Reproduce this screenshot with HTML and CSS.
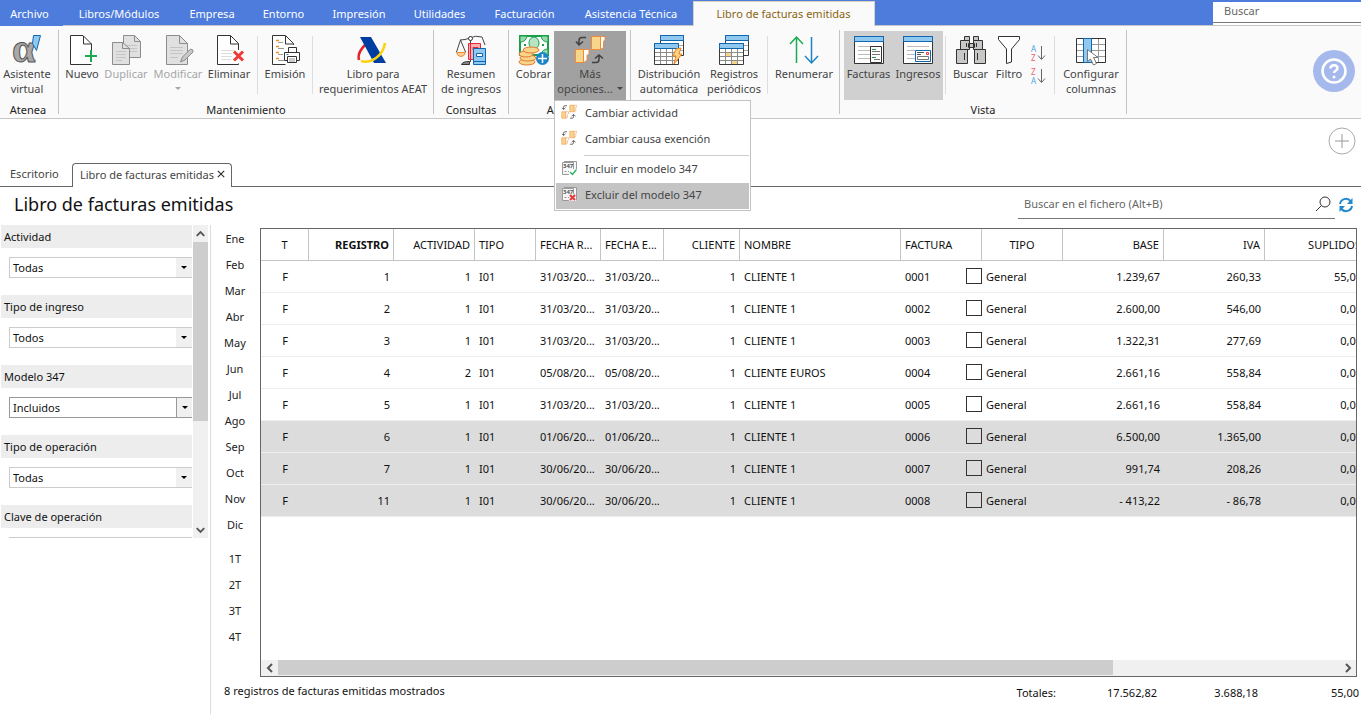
FILE: index.html
```html
<!DOCTYPE html>
<html lang="es">
<head>
<meta charset="utf-8">
<title>Libro de facturas emitidas</title>
<link rel="stylesheet" href="styles.css">
</head>
<body>
<svg class="defs" aria-hidden="true">
  <symbol id="swap" viewBox="0 0 32 32">
    <g fill="#f7d58a" stroke="#ee8a3a">
      <path d="M17.500 2.500h9v13h-9z"/><path fill="#fff" d="M26.500 2.500h4.500v3l-1.500 2v6l-3 2z"/>
      <path d="M1.500 15.500h8v13h-8z"/><path fill="#fff" d="M9.500 15.500h5.500v4l-2 2v5l-3.500 2z"/>
    </g>
    <path d="M12 3.500H8q-3 0-3 3v4M2 7.500l3 3.500 4-3.500M18 28.500h4q3 0 3-3v-4M21 24.500l4-3.500 4 3.500" fill="none" stroke="#404040" stroke-width="1.500"/>
  </symbol>
  <symbol id="calendars" viewBox="0 0 32 32">
    <path d="M7.500 1.500h23v20h-23z" fill="#fff" stroke="#3a3a38"/><path d="M7.500 1.500h23v5h-23z" fill="#90c8f0" stroke="#1067b0"/>
    <path d="M26 11.500h4M26 16.500h4" stroke="#aaa"/>
    <path d="M1.500 9.500h24v21h-24z" fill="#fff" stroke="#3a3a38"/>
    <path d="M2 18.500h23M2 22.500h23M2 26.500h23M7.500 14v16M13.500 14v16M19.500 14v16" stroke="#8b8b89"/>
    <path d="M1.500 9.500h24v5h-24z" fill="#90c8f0" stroke="#1067b0"/>
  </symbol>
  <symbol id="form347" viewBox="0 0 16 16">
    <path d="M3 1.500h12.500v12H13M1.500 2.500h11v12h-11z" fill="#f6f6f6" stroke="#999"/>
    <path d="M3.500 11.500h2M7 11.500h2" stroke="#999"/>
    <text x="2" y="8" font-size="6" font-weight="bold" fill="#555">347</text>
  </symbol>
</svg>

<header class="menubar">
  <nav class="menu-tabs" aria-label="Menú principal">
    <button class="menu-tab first">Archivo</button>
    <button class="menu-tab">Libros/Módulos</button>
    <button class="menu-tab">Empresa</button>
    <button class="menu-tab">Entorno</button>
    <button class="menu-tab">Impresión</button>
    <button class="menu-tab">Utilidades</button>
    <button class="menu-tab">Facturación</button>
    <button class="menu-tab">Asistencia Técnica</button>
    <button class="menu-tab active">Libro de facturas emitidas</button>
  </nav>
  <div class="app-search"><input type="text" aria-label="Buscar" placeholder="Buscar"></div>
</header>

<section class="ribbon">
  <div class="group g-atenea">
    <div class="tools">
      <button class="tool"><svg viewBox="0 0 32 32"><text x="1" y="28" font-family="Liberation Serif" font-size="42" font-weight="bold" fill="#a8a8a8" stroke="#555">α</text><path d="M22.500 1.500h7l-4 15-4-7z" fill="#90c8f0" stroke="#1067b0"/></svg><span>Asistente<br>virtual</span></button>
    </div>
    <div class="caption">Atenea</div>
  </div>
  <div class="group g-mant">
    <div class="tools">
      <button class="tool"><svg viewBox="0 0 32 32"><path d="M25.500 15v-5l-8.500-8.500H4.500v29h21v-3" fill="#fff"/><path d="M25.500 16v-6l-8.500-8.500H4.500v29h21M17.500 2v8h8" fill="none" stroke="#333"/><path d="M25 16v12M19 22h12" stroke="#18ab50" stroke-width="2"/></svg>Nuevo</button>
      <button class="tool off"><svg viewBox="0 0 32 32"><g fill="#e0e0e0" stroke="#8c8c8c"><path d="M13.500 1.500h11l6 6v16h-17z"/><path fill="none" d="M24.500 1.500v6h6"/><path stroke="#c4c4c4" d="M16 11.500h11M16 14.500h11M16 17.500h11"/><path d="M2.500 8.500h10l7 6v16h-17z"/><path fill="none" d="M12.500 8.500v6h7"/><path stroke="#c4c4c4" d="M6 17.500h10M6 20.500h10M6 23.500h10M6 26.500h6"/></g></svg>Duplicar</button>
      <button class="tool off"><svg viewBox="0 0 32 32"><g fill="#e0e0e0" stroke="#8c8c8c"><path d="M4.500 1.500h13l8 8v21h-21z"/><path fill="none" d="M17.500 1.500v8h8"/><path stroke="#c4c4c4" d="M8 13.500h13M8 16.500h13M8 19.500h13M8 23.500h8"/><path fill="#c8c8c8" d="M18.500 28l2-5 8-8q3 0 2.500 3l-8 8z"/></g></svg>Modificar<span class="arrow"></span></button>
      <button class="tool"><svg viewBox="0 0 32 32"><path d="M4.500 1.500h13l8 8v21h-21z" fill="#fff"/><path d="M25.500 16V9.500l-8-8h-13v29h21v-1M17.500 2v8h8" fill="none" stroke="#333"/><path d="M8 16.500h14M8 19.500h11M8 22.500h11M8 25.500h10" stroke="#ddd"/><path d="M21 17.500l9 9M30 17.500l-9 9" stroke="#f03a38" stroke-width="3"/></svg>Eliminar</button>
      <span class="split"></span>
      <button class="tool"><svg viewBox="0 0 32 32"><path d="M24.500 11V9.500l-8-8h-13v29h13M16.500 2v8h8" fill="#fff" stroke="#333"/><path d="M7 6.500h3M7 12.500h3M7 18.500h3M7 24.500h3" stroke="#f09020" stroke-width="1.500"/><path d="M9 8.500h5M9 14.500h6M9 20.500h5M9 26.500h6" stroke="#999"/><path d="M19.500 18v-4.500h8V18M15.500 18.500h15v8h-15z" fill="#fff" stroke="#333"/><path d="M18.500 22.500h9v6h-9z" fill="#fff" stroke="#333"/><path d="M20 25h6M20 27h6" stroke="#999"/><path d="M17.500 20.500h2" stroke="#1888cc"/></svg>Emisión</button>
      <span class="split"></span>
      <button class="tool"><svg viewBox="0 0 32 32"><path d="M8 11q-8 8-6 15" fill="none" stroke="#e62128" stroke-width="2.500"/><path d="M3 3h11l15 26H17z" fill="#003da0"/><path d="M4 27c10 3 22-5 24-18" fill="none" stroke="#ffd10a" stroke-width="2.500"/></svg><span>Libro para<br>requerimientos AEAT</span></button>
    </div>
    <div class="caption">Mantenimiento</div>
  </div>
  <div class="group g-cons">
    <div class="tools">
      <button class="tool"><svg viewBox="0 0 32 32"><path d="M5.500 6l-4 12M5.500 6l5 12M5 6q5 0 10-2 5-3 12-1l3 8M15.500 2v26" fill="none" stroke="#444"/><circle cx="15.500" cy="4.500" r="2" fill="#fff" stroke="#333"/><path d="M1.500 18.500h9q-1 4-4.500 4t-4.500-4z" fill="#f9cf96" stroke="#ee8a3a"/><path d="M6.500 30.500q1-3 8-3v3z" fill="#888" stroke="#333"/><path d="M13.500 9.500h12v16h-12z" fill="#fbaeb0" stroke="#e02a36"/><path d="M15.500 9v16M18 13.500h5v2h-5z" fill="none" stroke="#e02a36"/><path d="M18.500 14.500h12v16h-12z" fill="#90c8f0" stroke="#1067b0"/><path d="M18 27.500h12" stroke="#1067b0"/><path d="M21.500 19.500h6v3h-6z" fill="#fff" stroke="#1067b0"/></svg><span>Resumen<br>de ingresos</span></button>
    </div>
    <div class="caption">Consultas</div>
  </div>
  <div class="group g-acc">
    <div class="tools">
      <button class="tool"><svg viewBox="0 0 32 32"><path d="M2 2h28v19H2z" fill="#fff" stroke="#18a048" stroke-width="2"/><path d="M2 2h7q-1 6-7 6zM30 2h-7q1 6 7 6zM30 21h-7q1-6 7-6z" fill="#99d8ac" stroke="#18a048"/><ellipse cx="16" cy="9" rx="5" ry="6" fill="#b8e4c4" stroke="#18a048"/><path d="M6 11h2M24 11h2" stroke="#18a048" stroke-width="2"/><g fill="#f9d48b" stroke="#e07a30"><ellipse cx="9" cy="28" rx="8" ry="3"/><ellipse cx="10" cy="24" rx="8" ry="3"/><ellipse cx="8" cy="20" rx="7" ry="3"/><ellipse cx="13" cy="16" rx="8" ry="3"/></g><circle cx="24.500" cy="24.500" r="6.500" fill="#1c85c8"/><path d="M24.500 20v9M20 24.500h9" stroke="#fff" stroke-width="1.500"/></svg>Cobrar</button>
      <div class="drop">
        <button class="tool pressed" aria-haspopup="menu" aria-expanded="true"><svg><use href="#swap"/></svg><span>Más</span><span class="with-arrow">opciones...<i class="caret"></i></span></button>
        <div class="menu" role="menu">
          <button class="item" role="menuitem"><svg><use href="#swap"/></svg>Cambiar actividad</button>
          <button class="item" role="menuitem"><svg><use href="#swap"/></svg>Cambiar causa exención</button>
          <hr>
          <button class="item" role="menuitem"><svg viewBox="0 0 16 16"><use href="#form347"/><path d="M8 9h8v7H8z" fill="#fff"/><path d="M9 12l2.500 2.500L15.500 9.500" fill="none" stroke="#30b060" stroke-width="1.500"/></svg>Incluir en modelo 347</button>
          <button class="item hot" role="menuitem"><svg viewBox="0 0 16 16"><use href="#form347"/><path d="M8 8h7v7H8z" fill="#eee"/><path d="M9 9l5 5M14 9l-5 5" stroke="#e83838" stroke-width="2"/></svg>Excluir del modelo 347</button>
        </div>
      </div>
    </div>
    <div class="caption">Acciones</div>
  </div>
  <div class="group g-proc">
    <div class="tools">
      <button class="tool"><svg viewBox="0 0 32 32"><use href="#calendars"/><path d="M23 15l5-1-2 6h3l-8 10 2-8h-3z" fill="#fbd27c" stroke="#f08020"/></svg><span>Distribución<br>automática</span></button>
      <button class="tool"><svg viewBox="0 0 32 32"><use href="#calendars"/><path d="M8 19h5v3H8zM14 27h5v3h-5z" fill="#f8d58c"/></svg><span>Registros<br>periódicos</span></button>
      <span class="split"></span>
      <button class="tool"><svg viewBox="0 0 32 32"><path d="M8.500 29V3M2 10l6.500-7 6.500 7" fill="none" stroke="#18ab50" stroke-width="1.500"/><path d="M23.500 3v26M17 22l6.500 7 6.500-7" fill="none" stroke="#1c85c8" stroke-width="1.500"/></svg>Renumerar</button>
    </div>
  </div>
  <div class="group g-vista">
    <div class="tools">
      <button class="tool on"><svg viewBox="0 0 32 32"><path d="M1.500 2.500h29v27h-29z" fill="#fff" stroke="#333"/><path d="M1.500 2.500h29v5h-29z" fill="#90c8f0" stroke="#1067b0"/><path d="M5 12.500h22M5 16.500h12M5 20.500h12M5 24.500h12" stroke="#bbb"/><path d="M17.500 12.500h11v16h-11z" fill="#fff" stroke="#333"/><path d="M19 15.500h4M19 23.500h4" stroke="#189a48"/><path d="M19 17.500h8M19 20.500h8M21 25.500h6" stroke="#777"/></svg>Facturas</button>
      <button class="tool on"><svg viewBox="0 0 32 32"><path d="M1.500 2.500h29v27h-29z" fill="#fff" stroke="#333"/><path d="M1.500 2.500h29v5h-29z" fill="#90c8f0" stroke="#1067b0"/><path d="M5 12.500h22M5 16.500h8M5 20.500h8M5 24.500h8" stroke="#bbb"/><path d="M13.500 16.500h15v11h-15z" fill="#fff" stroke="#1067b0"/><path d="M15 18.500h7M15 20.500h4" stroke="#555"/><path d="M15.500 22.500h11v3h-11z" fill="#fff" stroke="#777"/><path d="M24.500 18.500h2v2h-2z" fill="#fff" stroke="#f03a38"/></svg>Ingresos</button>
      <span class="split"></span>
      <button class="tool"><svg viewBox="0 0 32 32"><g fill="#c8c8c6" stroke="#333"><path d="M9.500 2.500h5v4h-5zM18.500 2.500h5v4h-5zM13.500 9.500h6v4h-6zM5.500 6.500h9v9h-9zM18.500 6.500h9v9h-9zM1.500 15.500h11v14h-11zM19.500 15.500h11v14h-11z"/><path d="M9.500 19v7M22.500 19v7M11.500 9v4M21.500 9v4"/></g></svg>Buscar</button>
      <button class="tool"><svg viewBox="0 0 32 32"><path d="M5.500 2.500h21v3l-8 9.500v13l-5 1.500V15l-8-9.500z" fill="#fff" stroke="#333"/></svg>Filtro</button>
      <div class="sorts">
        <button aria-label="Orden ascendente"><svg viewBox="0 0 16 18"><g font-size="8"><text x="1" y="8" fill="#4aa3dc">A</text><text x="1" y="17" fill="#f06068">Z</text></g><path d="M11.500 2v13M8 11.500l3.500 4 3.500-4" fill="none" stroke="#666"/></svg></button>
        <button aria-label="Orden descendente"><svg viewBox="0 0 16 18"><g font-size="8"><text x="1" y="8" fill="#f06068">Z</text><text x="1" y="17" fill="#4aa3dc">A</text></g><path d="M11.500 2v13M8 11.500l3.500 4 3.500-4" fill="none" stroke="#666"/></svg></button>
      </div>
      <span class="split"></span>
      <button class="tool"><svg viewBox="0 0 32 32"><path d="M1.500 4.500h29v24h-29z" fill="#fff" stroke="#333"/><path d="M2 10.500h28M2 16.500h28M2 22.500h28M23.500 5v23" stroke="#999"/><path d="M8.500 4.500h8v24h-8z" fill="#90c8f0" stroke="#1067b0"/><path d="M12.500 15.500v12l3-2.500 3 6 3-1.500-3-6h4.500z" fill="#fff" stroke="#777"/></svg><span>Configurar<br>columnas</span></button>
    </div>
    <div class="caption">Vista</div>
  </div>
  <button class="help" aria-label="Ayuda"><svg viewBox="0 0 42 42"><circle cx="21" cy="21" r="21" fill="#a5b9ec"/><circle cx="21" cy="21" r="11.500" fill="none" stroke="#fff" stroke-width="2.500"/><path d="M17.500 18.500c0-4.500 7-4.500 7 0 0 2-3.500 2-3.500 4.500" fill="none" stroke="#fff" stroke-width="2.500"/><circle cx="21" cy="27" r="1.500" fill="#fff"/></svg></button>
</section>

<div class="quick"><button aria-label="Añadir"><svg viewBox="0 0 28 28"><circle cx="14" cy="14" r="13" fill="none" stroke="#aaa"/><path d="M14 7v14M7 14h14" stroke="#999"/></svg></button></div>

<nav class="pages" aria-label="Pestañas">
  <button class="page-tab">Escritorio</button>
  <div class="page-tab current"><span>Libro de facturas emitidas</span><button aria-label="Cerrar"><svg viewBox="0 0 10 10"><path d="M1 1l8 8M9 1l-8 8" stroke="#333" stroke-width="1.500"/></svg></button></div>
</nav>

<div class="titlebar">
  <h1>Libro de facturas emitidas</h1>
  <div class="file-search">
    <input type="text" aria-label="Buscar en el fichero" placeholder="Buscar en el fichero (Alt+B)">
    <svg viewBox="0 0 16 16"><circle cx="10" cy="6" r="5" fill="none" stroke="#333"/><path d="M6.500 9.500L1 15" stroke="#333"/></svg>
  </div>
  <button class="refresh" aria-label="Actualizar"><svg viewBox="0 0 16 16"><path d="M2 7a6 6 0 0 1 10.500-3M14 9a6 6 0 0 1-10.500 3" fill="none" stroke="#2088cc" stroke-width="2"/><path d="M14.500 1v6H9zM1.500 15V9H7z" fill="#2088cc"/></svg></button>
</div>

<main class="work">
  <aside class="filters">
    <div class="filter-list">
      <label for="f1">Actividad</label><div class="pick"><select id="f1"><option>Todas</option></select><i></i></div>
      <label for="f2">Tipo de ingreso</label><div class="pick"><select id="f2"><option>Todos</option></select><i></i></div>
      <label for="f3">Modelo 347</label><div class="pick strong"><select id="f3"><option>Incluidos</option></select><i></i></div>
      <label for="f4">Tipo de operación</label><div class="pick"><select id="f4"><option>Todas</option></select><i></i></div>
      <label for="f5">Clave de operación</label><div class="pick"><select id="f5"><option>Todas</option></select><i></i></div>
    </div>
    <div class="vbar"><svg viewBox="0 0 16 17"><path d="M4 11l4-4 4 4" fill="none" stroke="#555" stroke-width="2"/></svg><div class="vthumb"></div><span></span><svg viewBox="0 0 16 17"><path d="M4 7l4 4 4-4" fill="none" stroke="#555" stroke-width="2"/></svg></div>
  </aside>
  <div class="content">
    <div class="upper">
      <nav class="periods" aria-label="Periodos">
        <button>Ene</button><button>Feb</button><button>Mar</button><button>Abr</button><button>May</button><button>Jun</button><button>Jul</button><button>Ago</button><button>Sep</button><button>Oct</button><button>Nov</button><button>Dic</button>
        <button class="quarter">1T</button><button>2T</button><button>3T</button><button>4T</button>
      </nav>
      <div class="frame">
        <div class="viewport">
          <table>
            <colgroup><col class="c48"><col class="c85"><col class="c81"><col class="c61"><col class="c65"><col class="c63"><col class="c76"><col class="c161"><col class="c81"><col class="c81"><col class="c101"><col class="c101"><col class="c101"></colgroup>
            <thead><tr><th class="mid">T</th><th class="num sorted">REGISTRO</th><th class="num">ACTIVIDAD</th><th>TIPO</th><th>FECHA R...</th><th>FECHA E...</th><th class="num">CLIENTE</th><th>NOMBRE</th><th>FACTURA</th><th class="mid">TIPO</th><th class="num">BASE</th><th class="num">IVA</th><th class="num">SUPLIDOS</th></tr></thead>
            <tbody>
              <tr><td class="mid">F</td><td class="num">1</td><td class="num">1</td><td>I01</td><td>31/03/20...</td><td>31/03/20...</td><td class="num">1</td><td>CLIENTE 1</td><td class="inv"><label>0001<input type="checkbox"></label></td><td>General</td><td class="num">1.239,67</td><td class="num">260,33</td><td class="num">55,00</td></tr>
              <tr><td class="mid">F</td><td class="num">2</td><td class="num">1</td><td>I01</td><td>31/03/20...</td><td>31/03/20...</td><td class="num">1</td><td>CLIENTE 1</td><td class="inv"><label>0002<input type="checkbox"></label></td><td>General</td><td class="num">2.600,00</td><td class="num">546,00</td><td class="num">0,00</td></tr>
              <tr><td class="mid">F</td><td class="num">3</td><td class="num">1</td><td>I01</td><td>31/03/20...</td><td>31/03/20...</td><td class="num">1</td><td>CLIENTE 1</td><td class="inv"><label>0003<input type="checkbox"></label></td><td>General</td><td class="num">1.322,31</td><td class="num">277,69</td><td class="num">0,00</td></tr>
              <tr><td class="mid">F</td><td class="num">4</td><td class="num">2</td><td>I01</td><td>05/08/20...</td><td>05/08/20...</td><td class="num">1</td><td>CLIENTE EUROS</td><td class="inv"><label>0004<input type="checkbox"></label></td><td>General</td><td class="num">2.661,16</td><td class="num">558,84</td><td class="num">0,00</td></tr>
              <tr><td class="mid">F</td><td class="num">5</td><td class="num">1</td><td>I01</td><td>31/03/20...</td><td>31/03/20...</td><td class="num">1</td><td>CLIENTE 1</td><td class="inv"><label>0005<input type="checkbox"></label></td><td>General</td><td class="num">2.661,16</td><td class="num">558,84</td><td class="num">0,00</td></tr>
              <tr class="sel"><td class="mid">F</td><td class="num">6</td><td class="num">1</td><td>I01</td><td>01/06/20...</td><td>01/06/20...</td><td class="num">1</td><td>CLIENTE 1</td><td class="inv"><label>0006<input type="checkbox"></label></td><td>General</td><td class="num">6.500,00</td><td class="num">1.365,00</td><td class="num">0,00</td></tr>
              <tr class="sel"><td class="mid">F</td><td class="num">7</td><td class="num">1</td><td>I01</td><td>30/06/20...</td><td>30/06/20...</td><td class="num">1</td><td>CLIENTE 1</td><td class="inv"><label>0007<input type="checkbox"></label></td><td>General</td><td class="num">991,74</td><td class="num">208,26</td><td class="num">0,00</td></tr>
              <tr class="sel"><td class="mid">F</td><td class="num">11</td><td class="num">1</td><td>I01</td><td>30/06/20...</td><td>30/06/20...</td><td class="num">1</td><td>CLIENTE 1</td><td class="inv"><label>0008<input type="checkbox"></label></td><td>General</td><td class="num">- 413,22</td><td class="num">- 86,78</td><td class="num">0,00</td></tr>
            </tbody>
          </table>
        </div>
        <div class="hbar"><svg viewBox="0 0 17 16"><path d="M11 4L7 8l4 4" fill="none" stroke="#555" stroke-width="2"/></svg><div class="track"><div class="hthumb"></div></div><svg viewBox="0 0 17 16"><path d="M7 4l4 4-4 4" fill="none" stroke="#555" stroke-width="2"/></svg></div>
      </div>
    </div>
    <footer class="status"><span class="count">8 registros de facturas emitidas mostrados</span><span>Totales:</span><span class="sum">17.562,82</span><span class="sum">3.688,18</span><span class="sum">55,00</span></footer>
  </div>
</main>
</body>
</html>
```
FILE: styles.css
```css
* { box-sizing: border-box; }
body {
  margin: 0;
  min-height: 100vh;
  display: flex;
  flex-direction: column;
  overflow: hidden;
  background: #fff;
  color: #111;
  font: 11px/15px "Noto Sans", "Open Sans", sans-serif;
}
button, input, select { font: inherit; color: inherit; }
button { border: 0; padding: 0; margin: 0; background: none; }
svg { display: block; }
.defs { position: absolute; width: 0; height: 0; }

/* Menu bar */
.menubar { display: flex; justify-content: space-between; height: 26px; background: #4d7cdc; border-bottom: 1px solid #c6c6c6; }
.menu-tabs { display: grid; grid-template-columns: 63px 113px 73px 70px 81px 80px 90px 123px 182px; height: 26px; }
.menu-tab { color: #fff; white-space: nowrap; padding-right: 1px; }
.menu-tab.first { background: #4d7cdc; padding-right: 4px; }
.menu-tab.active { margin-top: 1px; padding: 0 1px 1px 0; background: #fafafa; color: #8a6410; border: 1px solid #d8d4c0; border-bottom: 0; }
.app-search { width: 148px; margin-top: 2px; background: #fff; }
.app-search input { width: 100%; height: 21px; padding: 0 11px 3px; border: 0; border-bottom: 1px solid #777; background: none; outline: 0; }
::placeholder { color: #666; opacity: 1; }

/* Ribbon */
.ribbon { display: flex; height: 93px; padding: 4px 0; background: #fafafa; border-bottom: 1px solid #c6c6c6; color: #444; }
.group { display: flex; flex-direction: column; height: 84px; border-right: 1px solid #c4c4c4; }
.tools { display: grid; height: 70px; padding-top: 1px; }
.g-atenea { width: 59px; }
.g-atenea .tools { grid-template-columns: 54px; }
.g-atenea .caption { width: 56px; }
.g-mant .tools { grid-template-columns: 40px 48px 56px 46px 6px 54px 1px 120px; padding-left: 3px; }
.g-cons .tools { grid-template-columns: 74px; }
.g-acc .tools { grid-template-columns: 41px 72px; padding: 1px 4px 0; }
.g-proc .tools { grid-template-columns: 66px 64px 3px 70px; padding-left: 5px; }
.g-vista .tools { grid-template-columns: 49px 50px 5px 45px 32px 28px 3px 70px; padding-left: 4px; }
.tool { display: flex; flex-direction: column; align-items: center; justify-content: flex-start; width: 100%; height: 69px; padding-top: 3px; text-align: center; white-space: nowrap; }
.tool svg { flex: none; width: 32px; height: 32px; }
.tool.off { color: #a6a6a6; }
.tool.on { background: #d0d0d0; }
.tool.pressed { background: #a1a1a1; }
.caption { height: 14px; line-height: 20px; text-align: center; color: #222; }
.split { justify-self: end; width: 1px; height: 58px; margin-top: 5px; background: #dedede; }
.g-proc .split, .g-vista .split { justify-self: center; }
.arrow, .caret { width: 0; border: 3px solid transparent; border-top-color: currentColor; border-bottom: 0; }
.arrow { margin-top: 6px; }
.with-arrow { display: inline-flex; align-items: center; gap: 4px; }
.sorts { display: flex; flex-direction: column; gap: 5px; padding: 13px 0 0 5px; }
.sorts svg { width: 16px; height: 18px; }
.help { margin: 20px 6px 0 auto; width: 42px; height: 42px; }

/* Drop-down menu */
.drop { position: relative; }
.menu { position: absolute; z-index: 5; top: 69px; left: 0; width: 197px; padding: 0 1px 1px; border: 1px solid #c3c3c3; background: #fff; }
.item { display: flex; align-items: center; gap: 8px; width: 100%; height: 26px; padding: 0 5px 4px; color: #444; }
.item svg { width: 16px; height: 16px; }
.item.hot { background: #c4c4c4; }
.menu hr { margin: 2px 0 1px 28px; border: 0; border-top: 1px solid #ccc; }

/* Document tabs */
.quick { display: flex; align-items: flex-start; justify-content: flex-end; height: 44px; padding: 8px 5px 0 0; }
.quick svg { width: 28px; height: 28px; }
.pages { display: flex; height: 24px; border-bottom: 1px solid #666; color: #444; }
.page-tab { display: flex; align-items: center; height: 24px; padding: 0 14px 3px 10px; white-space: nowrap; }
.pages > button { width: 72px; }
.page-tab.current { width: 160px; padding: 0 9px 3px 7px; gap: 3px; justify-content: space-between; background: #fff; border: 1px solid #666; border-bottom: 0; border-radius: 4px 4px 0 0; }
.page-tab svg { width: 8px; height: 8px; }

.titlebar { display: flex; align-items: flex-start; height: 38px; padding: 0 7px 0 14px; }
h1 { flex: 1; margin: 4px 0 0; font-size: 18px; line-height: 26px; font-weight: 400; }
.file-search { display: flex; align-items: center; width: 317px; height: 32px; padding: 2px 4px 0 6px; border-bottom: 1px solid #777; }
.file-search input { flex: 1; height: 24px; padding: 0; border: 0; outline: 0; background: none; }
.file-search svg { width: 16px; height: 16px; }
.refresh { margin: 10px 0 0 3px; }
.refresh svg { width: 16px; height: 16px; }

/* Work area */
.work { flex: 1; display: flex; min-height: 0; }
.filters { display: flex; align-items: flex-start; width: 211px; border-right: 1px solid #ddd; padding-left: 1px; }
.filter-list { flex: 1; height: 313px; overflow: hidden; display: flex; flex-direction: column; }
.filter-list label { flex: none; height: 23px; padding-left: 3px; line-height: 23px; background: #ededed; }
.pick { position: relative; flex: none; height: 21px; margin: 9px 0 17px 8px; border: 1px solid #ccc; border-right: 0; }
.pick select { display: block; width: 100%; height: 19px; padding: 0 20px 0 3px; border: 0; appearance: none; background: #fff; outline: 0; }
.pick i { position: absolute; top: 0; right: 0; width: 16px; height: 19px; background: #f0f0f0; pointer-events: none; }
.pick i::after { content: ""; display: block; width: 0; margin: 8px 5px; border: 3px solid transparent; border-top-color: #000; border-bottom: 0; }
.pick.strong { border-color: #999; }
.pick.strong i { border-left: 1px solid #999; }
.vbar { display: flex; flex-direction: column; width: 15px; height: 313px; margin: 0 2px 0 1px; background: #f0f0f0; }
.vbar svg { width: 15px; height: 17px; }
.vthumb { flex: 179; background: #cdcdcd; }
.vbar span { flex: 100; }

.content { flex: 1; display: flex; flex-direction: column; min-width: 0; }
.upper { flex: 1; display: flex; min-height: 0; padding: 3px 4px 0 0; }
.periods { display: flex; flex-direction: column; width: 49px; }
.periods button { height: 26px; padding: 0 1px 5px 0; color: #222; }
.periods .quarter { margin-top: 8px; }
.frame { flex: 1; min-width: 0; display: flex; flex-direction: column; border: 1px solid #666; }
.viewport { flex: 1; overflow: hidden; }
table { width: 1105px; table-layout: fixed; border-collapse: separate; border-spacing: 0; }
.c48 { width: 48px; } .c85 { width: 85px; } .c81 { width: 81px; } .c61 { width: 61px; } .c65 { width: 65px; }
.c63 { width: 63px; } .c76 { width: 76px; } .c161 { width: 161px; } .c101 { width: 101px; }
th, td { height: 32px; padding: 0 4px 1px; text-align: left; white-space: nowrap; font-weight: 400; }
th { border-right: 1px solid #c4c4c4; border-bottom: 1px solid #c4c4c4; }
td { border-bottom: 1px solid #eee; }
.num { text-align: right; }
.mid { text-align: center; }
.sorted { font-weight: 700; }
.sel { background: #dcdcdc; }
.inv { padding-right: 0; }
.inv label { display: flex; align-items: center; justify-content: space-between; }
.inv input { appearance: none; width: 16px; height: 16px; margin: 0; border: 1px solid #333; }
.hbar { display: flex; height: 16px; background: #f0f0f0; }
.hbar svg { width: 17px; height: 16px; }
.track { flex: 1; }
.hthumb { width: 78.7%; height: 15px; background: #cdcdcd; }

.status { display: flex; height: 37px; padding: 6px 2px 0 13px; }
.status span { padding-top: 2px; }
.status .count { flex: 1; padding-top: 0; }
.status .sum { width: 101px; text-align: right; }
```
